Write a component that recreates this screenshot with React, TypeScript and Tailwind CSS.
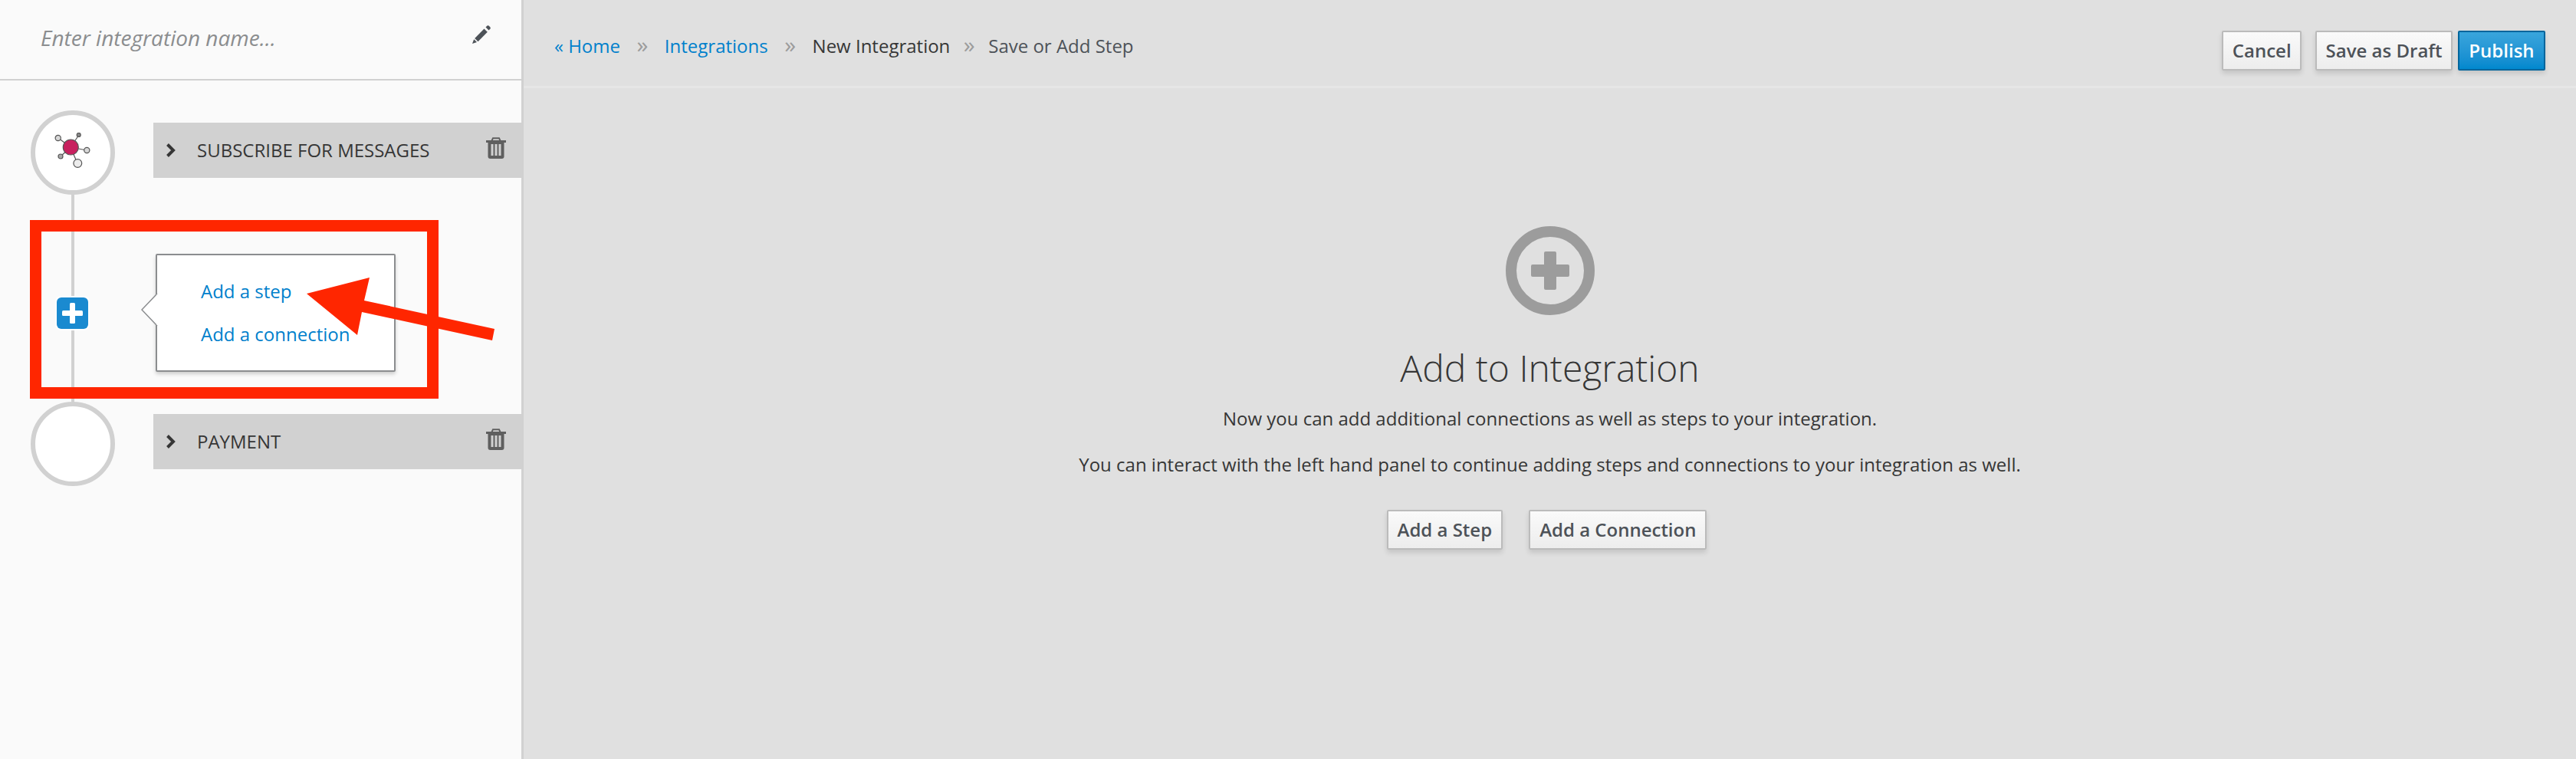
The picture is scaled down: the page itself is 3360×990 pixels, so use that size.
import React from "react";

const font = { fontFamily: '"Open Sans", sans-serif' };

const TrashIcon = () => (
  <svg viewBox="0 0 26 28" className="w-[26px] h-[28px] mb-[6px]">
    <path d="M7.5 4.5 L9 1.2 H17 L18.5 4.5" stroke="#5f5f5f" strokeWidth="2" fill="none" />
    <rect x="0" y="4" width="26" height="3" fill="#5f5f5f" />
    <path d="M2.5 7 H23.5 V25 Q23.5 28 20.5 28 H5.5 Q2.5 28 2.5 25 Z" fill="#5f5f5f" />
    <rect x="6.5" y="9" width="3" height="15" fill="#d1d1d1" />
    <rect x="11.5" y="9" width="3" height="15" fill="#d1d1d1" />
    <rect x="16.5" y="9" width="3" height="15" fill="#d1d1d1" />
  </svg>
);

const Chevron = () => (
  <svg viewBox="0 0 13 18" className="w-[13px] h-[18px]" fill="none">
    <path d="M2.5 1.5 L10 9 L2.5 16.5" stroke="#363636" strokeWidth="4" />
  </svg>
);

const NodeLogo = () => (
  <svg viewBox="0 0 52 52" className="w-[52px] h-[52px]">
    <g stroke="#555" strokeWidth="1.2">
      <path d="M7 7 L23 19 M34 3 L23 19 M44 23 L23 19 M10 31 L23 19 M32 40 L23 19" />
      <circle cx="6.7" cy="7" r="3.6" fill="#d8d8d8" />
      <circle cx="33.7" cy="2.9" r="2.5" fill="#8a8a8a" />
      <circle cx="44.3" cy="23" r="3.6" fill="#d8d8d8" />
      <circle cx="10" cy="31" r="3" fill="#a8a8a8" />
      <circle cx="32.3" cy="40" r="5.4" fill="#ececec" />
      <circle cx="23.3" cy="19" r="10" fill="#c8215f" />
    </g>
  </svg>
);

const Step = ({ title, logo }: { title: string; logo?: boolean }) => (
  <div className="flex items-start pl-[40px] gap-[50px]">
    <div className="w-[110px] h-[110px] rounded-full border-[6px] border-[#d1d1d1] bg-white flex items-center justify-center shrink-0">
      {logo && <NodeLogo />}
    </div>
    <div className="flex-1 h-[72px] mt-[16px] bg-[#d1d1d1] flex items-center pl-[16px] pr-[20px] text-[24px] text-[#363636]">
      <Chevron />
      <span className="ml-[28px] flex-1">{title}</span>
      <TrashIcon />
    </div>
  </div>
);

const DefaultButton = ({ children, slim }: { children: React.ReactNode; slim?: boolean }) => (
  <button className={`h-[52px] ${slim ? "px-[11.5px]" : "px-[12px]"} border-2 border-[#bbbbbb] bg-gradient-to-b from-[#fafafa] to-[#ededed] text-[24px] font-semibold text-[#4d5258] shadow-[0_4px_6px_rgba(0,0,0,0.12)] rounded-[2px]`}>
    {children}
  </button>
);

const Sidebar = () => (
  <aside className="w-[683px] shrink-0 h-full bg-[#fafafa] border-r-[3px] border-[#d1d1d1]">
    <div className="h-[105px] border-b-2 border-[#d1d1d1] flex items-center justify-between pl-[53px] pr-[40px]">
      <span className="text-[28px] italic text-[#8b8d8f] mb-[6px]">Enter integration name...</span>
      <svg viewBox="0 0 24 24" className="w-[24px] h-[24px] mb-[14px]" fill="#4d5258">
        <path d="M17.5 2.5 L19.5 .5 Q20.5 0 21.5 .5 L23.5 2.5 Q24 3.5 23.5 4.5 L21.5 6.5 Z" />
        <path d="M15.5 4.5 L19.8 8.8 L7.5 21.2 L3.2 17 Z" />
        <path d="M2.2 18.2 L6 22 L0 24 Z" />
      </svg>
    </div>
    <div className="pt-[39px]">
      <Step title="SUBSCRIBE FOR MESSAGES" logo />
      <div className="h-[270px] flex items-center pl-[74px] pt-[38px] relative">
        <div className="absolute left-[93px] top-0 bottom-0 w-[4px] bg-[#d1d1d1]" />
        <div className="relative w-[41px] h-[41px] rounded-[6px] bg-[#1a8ad0] ring-2 ring-white flex items-center justify-center">
          <svg viewBox="0 0 29 29" className="w-[29px] h-[29px]" fill="#fff">
            <rect x="11" y="1" width="7" height="27" rx="1.5" />
            <rect x="1" y="11" width="27" height="7" rx="1.5" />
          </svg>
        </div>
        <div className="relative ml-[88px] w-[313px] h-[154px] bg-white border-2 border-[#8b8d8f] rounded-[2px] shadow-[0_3px_5px_rgba(0,0,0,0.18)] flex flex-col pl-[57px] pt-[31px] gap-[25px] text-[24px] leading-[31px] text-[#0080cc]">
          <svg viewBox="0 0 22 42" className="absolute left-[-21px] top-[50px] w-[22px] h-[42px]">
            <path d="M21 0 L1 21 L21 42" fill="#fff" stroke="#8b8d8f" strokeWidth="1.5" />
            <rect x="20.5" y="1" width="2" height="40" fill="#fff" />
          </svg>
          <a>Add a step</a>
          <a>Add a connection</a>
        </div>
      </div>
      <Step title="PAYMENT" />
    </div>
  </aside>
);

const Sep = ({ tight }: { tight?: boolean }) => (
  <span className={`text-[30px] leading-none text-[#9c9c9c] mb-[4px] ${tight ? "-mx-[3.5px]" : "px-[0.5px]"}`}>»</span>
);

const Main = () => (
  <main className="flex-1 h-full bg-[#e0e0e0] flex flex-col">
    <div className="h-[115px] border-b-[3px] border-[#e6e6e6] flex items-start justify-between px-[40px] shrink-0">
      <div className="flex items-center gap-[21px] text-[24px] h-[120px]">
        <a className="text-[#0080cc]">« Home</a>
        <Sep />
        <a className="text-[#0080cc]">Integrations</a>
        <Sep />
        <span className="text-[#363636]">New Integration</span>
        <Sep tight />
        <span className="text-[#4d5258]">Save or Add Step</span>
      </div>
      <div className="flex items-center pt-[40px]">
        <DefaultButton slim>Cancel</DefaultButton>
        <div className="w-[18px]" />
        <DefaultButton slim>Save as Draft</DefaultButton>
        <button className="ml-[7px] h-[52px] w-[114px] border-2 border-[#00659c] bg-gradient-to-b from-[#39a5dc] to-[#0088ce] text-[24px] font-semibold text-white shadow-[0_4px_6px_rgba(0,0,0,0.12)] rounded-[2px]">
          Publish
        </button>
      </div>
    </div>
    <div className="flex flex-col items-center pt-[180px]">
      <svg viewBox="0 0 116 116" className="w-[116px] h-[116px]">
        <circle cx="58" cy="58" r="51" fill="none" stroke="#9c9c9c" strokeWidth="14" />
        <rect x="50" y="33" width="16" height="50" rx="2" fill="#9c9c9c" />
        <rect x="33" y="50" width="50" height="16" rx="2" fill="#9c9c9c" />
      </svg>
      <h1 className="mt-[36px] text-[48px] font-light leading-[66px] text-[#363636]">Add to Integration</h1>
      <p className="mt-[16px] text-[24px] leading-[34px] text-[#363636]">Now you can add additional connections as well as steps to your integration.</p>
      <p className="mt-[26px] text-[24px] leading-[34px] text-[#363636]">You can interact with the left hand panel to continue adding steps and connections to your integration as well.</p>
      <div className="flex gap-[34px] mt-[42px] mr-[8px]">
        <DefaultButton>Add a Step</DefaultButton>
        <DefaultButton>Add a Connection</DefaultButton>
      </div>
    </div>
  </main>
);

export default function App() {
  return (
    <div className="relative w-[3360px] h-[990px] flex overflow-hidden" style={font}>
      <Sidebar />
      <Main />
      {/* annotation drawn on top of the screenshot */}
      <div className="absolute left-[39px] top-[287px] w-[533px] h-[233px] border-[15px] border-[#ff2600]" />
      <svg className="absolute left-0 top-0 w-[700px] h-[500px]" viewBox="0 0 700 500">
        <path d="M400 383 L482 362 L475 392 L645 429 L642 444 L472 407 L466 437 Z" fill="#ff2600" />
      </svg>
    </div>
  );
}
